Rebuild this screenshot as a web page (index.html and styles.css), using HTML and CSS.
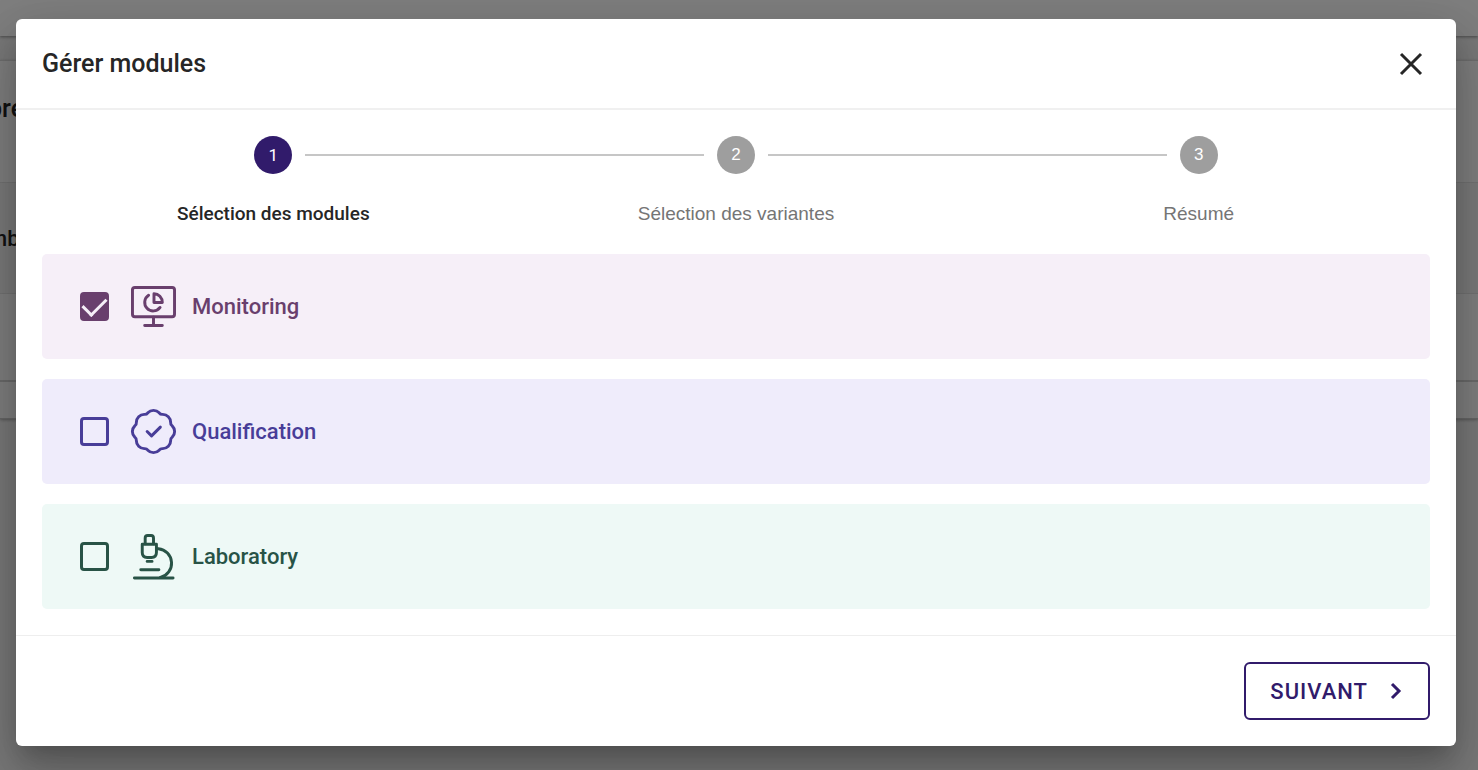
FILE: index.html
```
<!DOCTYPE html>
<html lang="fr">

<head>
    <meta charset="utf-8">
    <meta name="viewport" content="width=device-width, initial-scale=1.0">
    <title>Gérer modules</title>

    <link rel="stylesheet" href="styles.css">
</head>

<body>
    <div class="page" aria-hidden="true">
        <div class="topbar"></div>
        <div class="panel">
            <div class="panel-title"><span>pre</span></div>
            <div class="panel-head"><span>mb</span></div>
            <div class="panel-row"></div>
            <div class="panel-foot"></div>
        </div>
    </div>

    <div class="overlay">
        <form class="modal" role="dialog" aria-labelledby="modal-title">
            <header class="modal-header">
                <h1 id="modal-title">Gérer modules</h1>
                <button type="button" class="close" aria-label="Fermer">
                    <svg width="24" height="24" viewBox="0 0 24 24"><path d="M2 2L22 22M22 2L2 22" /></svg>
                </button>
            </header>

            <div class="modal-content">
                <ol class="steps">
                    <li class="step active">
                        <div class="step-head"><span class="number">1</span></div>
                        <p>Sélection des modules</p>
                    </li>
                    <li class="step">
                        <div class="step-head"><span class="number">2</span></div>
                        <p>Sélection des variantes</p>
                    </li>
                    <li class="step">
                        <div class="step-head"><span class="number">3</span></div>
                        <p>Résumé</p>
                    </li>
                </ol>

                <div class="modules">
                    <label class="module monitoring" for="monitoring">
                        <input type="checkbox" id="monitoring" checked>
                        <svg class="icon" viewBox="0 0 46 46">
                            <rect x="1.5" y="3.5" width="43" height="30" rx="2.5" />
                            <path d="M23 34V42M14 42.5H32" />
                            <path d="M18 11.500A8.700 8.700 0 1 0 29.700 24" />
                            <path d="M23.500 10V19H32A8.500 9 0 0 0 23.500 10Z" />
                        </svg>
                        <span>Monitoring</span>
                    </label>

                    <label class="module qualification" for="qualification">
                        <input type="checkbox" id="qualification">
                        <svg class="icon" viewBox="0 0 46 46">
                            <path d="M17.2 3.9A8 8 0 0 1 28.8 3.9A4 4 0 0 0 32.4 5.5A8 8 0 0 1 40.5 13.6A4 4 0 0 0 42.1 17.2A8 8 0 0 1 42.1 28.8A4 4 0 0 0 40.5 32.4A8 8 0 0 1 32.4 40.5A4 4 0 0 0 28.8 42.1A8 8 0 0 1 17.2 42.1A4 4 0 0 0 13.6 40.5A8 8 0 0 1 5.5 32.4A4 4 0 0 0 3.9 28.8A8 8 0 0 1 3.9 17.2A4 4 0 0 0 5.5 13.6A8 8 0 0 1 13.6 5.5A4 4 0 0 0 17.2 3.9Z" />
                            <path d="M16.500 23L21 27.500L30 18.500" />
                        </svg>
                        <span>Qualification</span>
                    </label>

                    <label class="module laboratory" for="laboratory">
                        <input type="checkbox" id="laboratory">
                        <svg class="icon" viewBox="0 0 46 46">
                            <path d="M14.500 10V4Q14.500 1.500 17 1.500H20.500Q23 1.500 23 4V10" />
                            <path d="M11.500 10.500H26V19Q26 24 21 24H16.500Q11.500 24 11.500 19Z" />
                            <path d="M16.500 28H21.500M10 36.500H28.500M3.500 45H43" />
                            <path d="M26 15H28A15 15 0 0 1 30 44.500" />
                        </svg>
                        <span>Laboratory</span>
                    </label>
                </div>
            </div>

            <footer class="modal-footer">
                <button type="button" class="next">
                    Suivant
                    <svg width="16" height="20" viewBox="0 0 16 20"><path d="M4 3L11 10L4 17" /></svg>
                </button>
            </footer>
        </form>
    </div>
</body>

</html>
```

FILE: styles.css
```
* {
    box-sizing: border-box;
    margin: 0;
}

body {
    font-family: Roboto, sans-serif;
    color: #262626;
    background: #f2f2f2;
    min-height: 100vh;
    overflow: hidden;
}

/* page under the dialog */
.topbar {
    height: 36px;
    background: #ffffff;
    box-shadow: 0 1px 3px rgba(0, 0, 0, 0.4);
}

.panel {
    margin-top: 24px;
    background: #ffffff;
    border-top: 1px solid #dddddd;
    border-bottom: 1px solid #cccccc;
    box-shadow: 0 1px 3px rgba(0, 0, 0, 0.3);
    font-weight: 500;
}

.panel span {
    margin-left: -12px;
}

.panel-title {
    height: 122px;
    padding-top: 33px;
    font-size: 25px;
    border-bottom: 1px solid #e4e4e4;
}

.panel-head {
    height: 111px;
    display: flex;
    align-items: center;
    font-size: 22px;
    background: #f5f5f5;
    border-bottom: 1px solid #e4e4e4;
}

.panel-row {
    height: 88px;
    border-bottom: 2px solid #d4d4d4;
}

.panel-foot {
    height: 36px;
}

.overlay {
    position: absolute;
    top: 0;
    left: 0;
    width: 100%;
    min-height: 100vh;
    padding: 19px 22px 24px 16px;
    background: rgba(0, 0, 0, 0.5);
}

.modal {
    background: #ffffff;
    border-radius: 6px;
    box-shadow: 0 14px 20px -8px rgba(0, 0, 0, 0.2), 0 30px 48px 4px rgba(0, 0, 0, 0.14), 0 12px 56px 10px rgba(0, 0, 0, 0.12);
}

.modal-header {
    display: flex;
    justify-content: space-between;
    align-items: center;
    height: 91px;
    padding: 0 33px 0 26px;
    border-bottom: 2px solid #f0f0f0;
}

h1 {
    font-size: 25px;
    font-weight: 500;
}

button {
    font-family: inherit;
    background: none;
    cursor: pointer;
}

svg {
    display: block;
    fill: none;
    stroke: currentColor;
}

.close {
    padding: 0;
    border: 0;
    color: #262626;
    stroke-width: 3px;
}

.modal-content {
    padding: 26px;
}

.steps {
    display: grid;
    grid-template-columns: repeat(3, 1fr);
    padding: 0;
    margin-bottom: 28px;
    list-style: none;
    text-align: center;
    font-family: "Liberation Sans", Arial, sans-serif;
    font-size: 19px;
    color: #757575;
}

.step-head {
    display: flex;
    align-items: center;
    gap: 13px;
    margin-bottom: 28px;
}

.step-head::before,
.step-head::after {
    content: "";
    flex: 1;
    height: 2px;
    background: #c6c6c6;
}

.step:first-child .step-head::before,
.step:last-child .step-head::after {
    background: none;
}

.number {
    width: 38px;
    line-height: 38px;
    border-radius: 50%;
    font-size: 17px;
    color: #ffffff;
    background: #9e9e9e;
}

.step p {
    line-height: 24px;
}

.active {
    font-family: Roboto, sans-serif;
    font-weight: 500;
    color: #262626;
}

.active .number {
    font-weight: 400;
    background: #311b6b;
}

.modules {
    display: grid;
    gap: 20px;
}

.module {
    display: flex;
    align-items: center;
    height: 105px;
    padding: 0 38px;
    border-radius: 5px;
    font-size: 22px;
    font-weight: 500;
    cursor: pointer;
}

.module input {
    appearance: none;
    width: 29px;
    height: 29px;
    margin: 0 22px 0 0;
    border: 3px solid currentColor;
    border-radius: 4px;
    color: inherit;
}

.module input:checked {
    display: grid;
    place-items: center;
    background: currentColor;
}

/* tick */
.module input:checked::before {
    content: "";
    width: 20px;
    height: 11px;
    margin-bottom: 6px;
    border: solid #f6eff8;
    border-width: 0 0 3px 3px;
    transform: rotate(-45deg);
}

.icon {
    width: 45px;
    height: 45px;
    margin-right: 16px;
    overflow: visible;
    stroke-width: 3px;
    stroke-linecap: round;
    stroke-linejoin: round;
}

.monitoring {
    color: #693f6d;
    background: #f6eff8;
}

.qualification {
    color: #483d98;
    background: #efecfb;
}

.laboratory {
    color: #285346;
    background: #eef9f6;
}

.modal-footer {
    display: flex;
    justify-content: flex-end;
    padding: 26px;
    border-top: 1px solid #eeeeee;
}

.next {
    display: flex;
    align-items: center;
    gap: 20px;
    height: 58px;
    padding: 0 24px;
    border: 2px solid #311b6b;
    border-radius: 6px;
    font-size: 22px;
    font-weight: 500;
    letter-spacing: 1px;
    text-transform: uppercase;
    color: #311b6b;
    stroke-width: 3px;
}
```
